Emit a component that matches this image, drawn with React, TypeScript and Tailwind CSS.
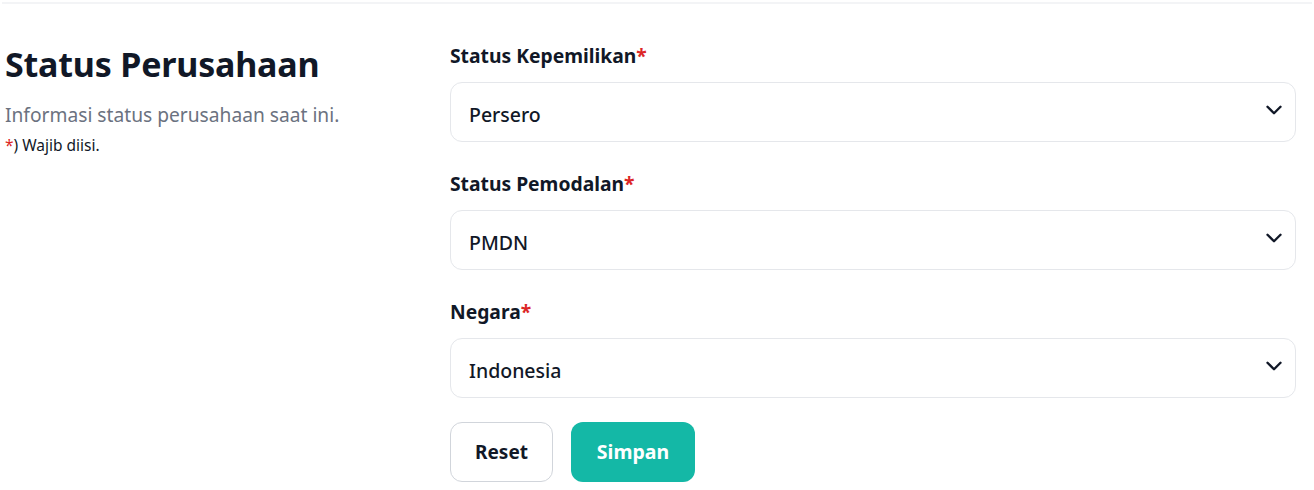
import React from "react";
import { ChevronDown } from "lucide-react";

const fields = [
  { label: "Status Kepemilikan", value: "Persero" },
  { label: "Status Pemodalan", value: "PMDN" },
  { label: "Negara", value: "Indonesia" },
];

export default function App() {
  return (
    <div
      className="w-[1314px] h-[490px] bg-white text-[#111827]"
      style={{ fontFamily: '"Noto Sans", "Open Sans", sans-serif' }}
    >
      <div className="mx-[2px] h-[2px] bg-[#f3f4f6] mt-[2px]" />
      <div className="flex pt-[38px]">
        <div className="w-[450px] pl-[5px]">
          <h1 className="text-[34px] leading-[44px] font-bold tracking-[-0.2px]">Status Perusahaan</h1>
          <p className="mt-[15px] text-[19.2px] leading-[28px] text-[#6b7280]">
            Informasi status perusahaan saat ini.
          </p>
          <p className="mt-[5px] text-[15.5px] leading-[22px]">
            <span className="text-[#dc2626]">*</span>) Wajib diisi.
          </p>
        </div>
        <div className="w-[846px] flex flex-col gap-[28px]">
          {fields.map((f) => (
            <div key={f.label} className="flex flex-col gap-3">
              <label className="text-[19.3px] leading-[28px] font-bold">
                {f.label}
                <span className="text-[#dc2626]">*</span>
              </label>
              <div className="h-[60px] rounded-xl border border-[#e5e7eb] flex items-center justify-between pl-[18px] pr-[8px]">
                <span className="text-[19.5px] font-medium pt-[5px]">{f.value}</span>
                <ChevronDown className="w-[26px] h-[26px] mb-1" strokeWidth={2.2} />
              </div>
            </div>
          ))}
          <div className="flex gap-[18px] -mt-[4px]">
            <button className="h-[60px] w-[103px] rounded-xl border border-[#d1d5db] text-[19px] font-bold bg-white">
              Reset
            </button>
            <button className="h-[60px] w-[124px] rounded-xl bg-[#14b8a6] text-white text-[19.5px] font-bold">
              Simpan
            </button>
          </div>
        </div>
      </div>
    </div>
  );
}
